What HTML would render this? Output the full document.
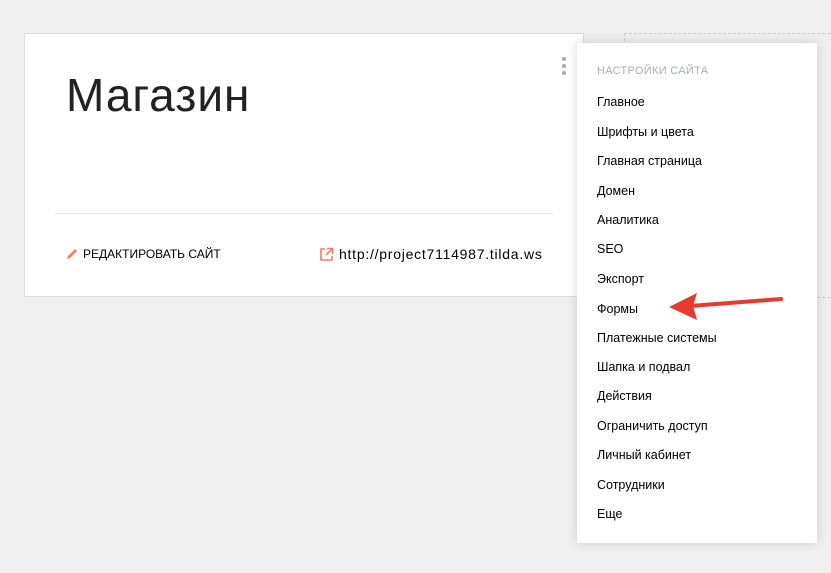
<!DOCTYPE html>
<html><head><meta charset="utf-8"><style>
body{margin:0;width:831px;height:573px;background:#efefef;position:relative;overflow:hidden;font-family:"Liberation Sans",sans-serif;color:#000}
.card{position:absolute;left:24px;top:33px;width:558px;height:262px;background:#fff;border:1px solid #ddd}
.dash{position:absolute;left:624px;top:33px;width:220px;height:263px;border:1px dashed #ccc;border-right:none}
h1{position:absolute;left:41px;top:38px;margin:0;font-weight:normal;font-size:46px;letter-spacing:1px;line-height:1;color:#222}
.hr{position:absolute;left:30px;top:179px;width:498px;height:1px;background:#e2e2e2}
.edit{position:absolute;left:58px;top:213px;font-size:12px;letter-spacing:0}
.link{position:absolute;left:314px;top:212px;font-size:14px;letter-spacing:0.75px}
.dots{position:absolute;left:562px;top:57px}
.dots i{display:block;width:4px;height:4px;border-radius:2px;background:#aaa;margin-bottom:3px}
.menu{position:absolute;left:577px;top:43px;width:240px;height:500px;background:#fff;box-shadow:0 0 10px rgba(0,0,0,.15)}
.menu .h{position:absolute;left:20px;top:22px;font-size:11px;color:#a8b0b8;letter-spacing:.3px}
.menu div.it{position:absolute;left:20px;font-size:12.5px}
</style></head><body>
<div class="dash"></div>
<div class="card">
<h1>Магазин</h1>
<div class="hr"></div>
<div class="edit"><svg width="14" height="14" viewBox="0 0 14 14" style="position:absolute;left:-18px;top:0"><path d="M2 12 L3 9 L10 2 L12 4 L5 11 Z" fill="#f08060"/></svg>РЕДАКТИРОВАТЬ САЙТ</div>
<div class="link"><svg width="15" height="15" viewBox="0 0 15 15" style="position:absolute;left:-20px;top:1px"><path d="M6 2H2v11h11V9" fill="none" stroke="#f08060" stroke-width="1.6"/><path d="M8 1.5h5.5V7M13.5 1.5L7 8" fill="none" stroke="#f08060" stroke-width="1.6"/></svg>http://project7114987.tilda.ws</div>
</div>
<div class="dots"><i></i><i></i><i></i></div>
<div class="menu">
<div class="h">НАСТРОЙКИ САЙТА</div>
<div class="it" style="top:52px">Главное</div>
<div class="it" style="top:82px">Шрифты и цвета</div>
<div class="it" style="top:111px">Главная страница</div>
<div class="it" style="top:141px">Домен</div>
<div class="it" style="top:170px">Аналитика</div>
<div class="it" style="top:199px">SEO</div>
<div class="it" style="top:229px">Экспорт</div>
<div class="it" style="top:259px">Формы</div>
<div class="it" style="top:288px">Платежные системы</div>
<div class="it" style="top:317px">Шапка и подвал</div>
<div class="it" style="top:346px">Действия</div>
<div class="it" style="top:376px">Ограничить доступ</div>
<div class="it" style="top:405px">Личный кабинет</div>
<div class="it" style="top:435px">Сотрудники</div>
<div class="it" style="top:464px">Еще</div>
</div>
<svg width="831" height="573" style="position:absolute;left:0;top:0">
<path d="M781 299 L690 306" stroke="#e53a2f" stroke-width="4" stroke-linecap="round"/>
<path d="M669 307 L697 293 L693 306 L697 320 Z" fill="#e53a2f"/>
</svg>
</body></html>
